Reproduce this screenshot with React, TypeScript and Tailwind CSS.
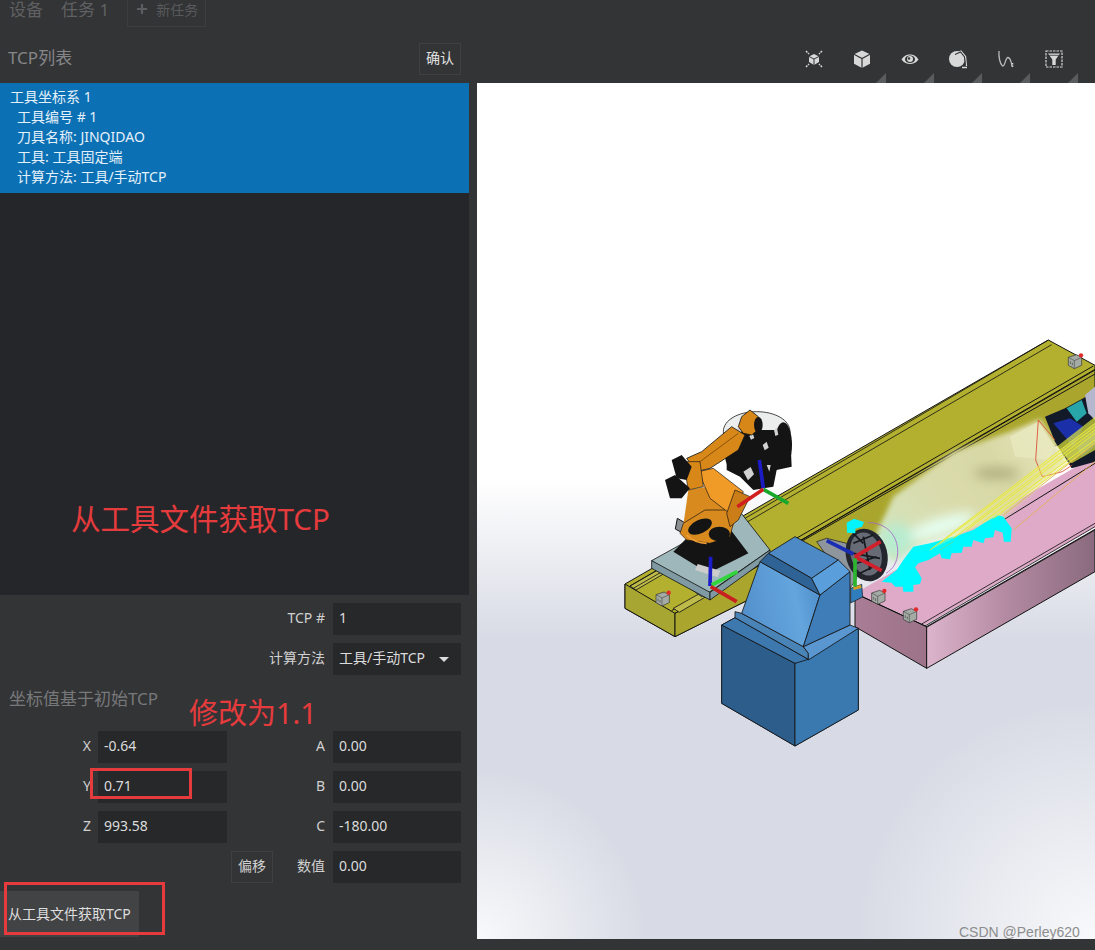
import React from "react";

function ToolBtn({ corner = true, children }: { corner?: boolean; children: React.ReactNode }) {
  return (
    <div className="relative flex h-10 w-12 items-start justify-center">
      <div className="mt-[4px] h-6 w-6">{children}</div>
      {corner && (
        <div className="absolute bottom-0 right-0 h-[10px] w-[10px] bg-[#5a5b5d] [clip-path:polygon(100%_0,100%_100%,0_100%)]" />
      )}
    </div>
  );
}

function Toolbar() {
  const c = "#d8d8d8";
  return (
    <div className="flex h-[56px] items-end justify-end pr-[17px]">
      <ToolBtn corner={false}>
        <svg viewBox="0 0 24 24" className="h-6 w-6" fill="none">
          <path d="M4 4l3 3M20 4l-3 3M4 20l3-3M20 20l-3-3" stroke={c} strokeWidth="1.5" strokeDasharray="2 1" />
          <path d="M12 7l5 2.500v5.500l-5 3-5-3V9.500z" fill={c} />
          <path d="M7 9.500l5 2.500 5-2.500M12 12v6" stroke="#333436" strokeWidth="1" />
        </svg>
      </ToolBtn>
      <ToolBtn>
        <svg viewBox="0 0 24 24" className="h-6 w-6" fill="none">
          <path d="M12 3.500l8 3.800v9.500L12 21 4 16.800V7.300z" fill={c} />
          <path d="M4 7.300L12 11.500l8-4.200M12 11.500V21" stroke="#333436" strokeWidth="1.200" />
        </svg>
      </ToolBtn>
      <ToolBtn>
        <svg viewBox="0 0 24 24" className="h-6 w-6" fill="none">
          <path d="M3.500 12.500C6 8.500 9 7.500 12 7.500s6 1 8.500 5c-2.500 3.500-5.500 4.500-8.500 4.500s-6-1-8.500-4.500z" fill={c} />
          <ellipse cx="12" cy="12.300" rx="5" ry="3.800" fill="#333436" />
          <circle cx="12" cy="12" r="3" fill={c} />
          <circle cx="11" cy="11.500" r="1.200" fill="#333436" />
        </svg>
      </ToolBtn>
      <ToolBtn>
        <svg viewBox="0 0 24 24" className="h-6 w-6" fill="none">
          <circle cx="11" cy="12" r="8" fill={c} />
          <path d="M9 7l6-3 4.500 5.500 1 9.500M16 20.500h5" stroke={c} strokeWidth="1.300" />
          <path d="M9 7.500l5.500-2.500 4 5 .8 8" stroke="#333436" strokeWidth="1.100" />
        </svg>
      </ToolBtn>
      <ToolBtn>
        <svg viewBox="0 0 24 24" className="h-6 w-6" fill="none">
          <path d="M5 4c-.5 6 1 13 3.500 15C11 20 11.500 10 14 10.500c2.500.5 3.500 5 4 9" stroke="#b9b9b9" strokeWidth="1.300" />
          <path d="M18.500 16v4.500" stroke={c} strokeWidth="1.600" strokeDasharray="1.500 1" />
        </svg>
      </ToolBtn>
      <ToolBtn>
        <svg viewBox="0 0 24 24" className="h-6 w-6" fill="none">
          <rect x="4" y="4" width="16" height="16" stroke={c} strokeWidth="1.200" strokeDasharray="2.500 1" />
          <path d="M6 6.500h12l-4.300 6V18h-3.400v-5.500z" fill={c} />
          <path d="M7 8.300h10" stroke="#333436" strokeWidth=".8" />
        </svg>
      </ToolBtn>
    </div>
  );
}

function Sensor({ x, y }: { x: number; y: number }) {
  return (
    <g transform={`translate(${x} ${y})`}>
      <path d="M-20 -8l24-8 16 8v24l-22 10-18-10z" fill="#a3aba4" stroke="#333" strokeWidth="2" />
      <path d="M-20 -8l18 10 22-10M-2 2v24" stroke="#333" strokeWidth="1.500" fill="none" />
      <path d="M-14 4v8M-8 8v8" stroke="#444" strokeWidth="2" />
      <circle cx="18" cy="-14" r="6.500" fill="#e22a2a" />
    </g>
  );
}

function Axis({ d, color }: { d: string; color: string }) {
  return <path d={d} stroke={color} strokeWidth="11" fill="none" strokeLinecap="butt" />;
}

function Scene() {
  const K = "#141414";
  return (
    <svg viewBox="-429 -741 1854 2568" className="block h-[856px] w-[618px]">
      <defs>
        <linearGradient id="pinkR" x1="920" y1="0" x2="1425" y2="0" gradientUnits="userSpaceOnUse">
          <stop offset="0" stopColor="#dcb4cc" />
          <stop offset=".45" stopColor="#b58ca3" />
          <stop offset="1" stopColor="#8a6a7e" />
        </linearGradient>
        <linearGradient id="pinkL" x1="705" y1="0" x2="920" y2="0" gradientUnits="userSpaceOnUse">
          <stop offset="0" stopColor="#a97d95" />
          <stop offset="1" stopColor="#9c7388" />
        </linearGradient>
        <linearGradient id="ghost" x1="780" y1="640" x2="1280" y2="300" gradientUnits="userSpaceOnUse">
          <stop offset="0" stopColor="#d4e4bc" />
          <stop offset=".4" stopColor="#dadbac" />
          <stop offset=".7" stopColor="#d8d8a6" />
          <stop offset="1" stopColor="#e6e5bb" />
        </linearGradient>
        <linearGradient id="hood" x1="365" y1="850" x2="600" y2="800" gradientUnits="userSpaceOnUse">
          <stop offset="0" stopColor="#5390cb" />
          <stop offset=".7" stopColor="#64a5de" />
          <stop offset="1" stopColor="#4f90cc" />
        </linearGradient>
        <filter id="b20"><feGaussianBlur stdDeviation="18" /></filter>
        <filter id="b8"><feGaussianBlur stdDeviation="8" /></filter>
      </defs>

      {/* yellow rail */}
      <path d="M15 762L1285 30l140 76v180L165 920 15 835z" fill="#b3b02f" stroke={K} strokeWidth="3" strokeLinejoin="round" />
      <path d="M15 762l150 88v70L15 835z" fill="#a8a633" stroke={K} strokeWidth="3" />
      <path d="M165 850L1425 118v170L165 920z" fill="#aaa62d" stroke={K} strokeWidth="3" />
      <path d="M165 850L1425 120M155 842L1420 108M180 842L1425 132" stroke={K} strokeWidth="3" fill="none" />
      <path d="M30 768l80-46 20 10-82 48zM1285 30L30 768" fill="#bebb4a" stroke={K} strokeWidth="2.500" />
      <path d="M40 775L1295 44" stroke={K} strokeWidth="2.500" />
      <path d="M160 835l85-48 18 10-85 50z" fill="#bebb4a" stroke={K} strokeWidth="2.500" />
      <Sensor x={128} y={802} />

      {/* plate */}
      <path d="M95 692L360 545l90 115-180 125-25 15z" fill="#9db7bb" stroke={K} strokeWidth="2.500" />
      <path d="M95 692l175 95v23L95 715z" fill="#7f9aa2" stroke={K} strokeWidth="2.500" />
      <path d="M270 787l180-127v20L270 810z" fill="#7f9aa2" stroke={K} strokeWidth="2.500" />

      {/* gripper */}
      <path d="M310 305c0-35 45-60 100-60s100 25 100 60-45 60-100 60-100-25-100-60z" fill="#eceded" stroke="#222" strokeWidth="2.500" />
      <path d="M320 340l50-40 140 0 5 110-45 10-10 50-60 10-40-40-40-20z" fill={K} />
      <ellipse cx="350" cy="375" rx="35" ry="50" fill={K} />
      <ellipse cx="490" cy="345" rx="26" ry="68" fill={K} />
      <path d="M370 425l22-14 10 22-18 18zM428 345l12-10 6 18-12 8zM462 300l9-6 4 20-9 4zM440 405l12 0-4 20zM388 318l10-8 5 14-10 5zM345 300l16-10 2 14-14 6z" fill="#d2d2d2" />

      {/* robot base */}
      <path d="M160 665l40-40 125-35 60 80-40 20-80 40-40-25z" fill={K} />
      <path d="M233 702l68 20-8 20-68-22z" fill="#ccc" />
      <path d="M172 565l24 14-8 30-22-12z" fill="#8b8f92" stroke={K} strokeWidth="3" />
      {/* lower arm and shoulder */}
      <path d="M205 480l55-10 90 60-10 60-90 0-60-5z" fill="#d98a1e" />
      <path d="M190 580l65-40 75 0 10 40-10 40-60 20-70-10-20-20z" fill="#d98a1e" stroke={K} strokeWidth="2" />
      <ellipse cx="240" cy="590" rx="38" ry="20" fill={K} transform="rotate(-25 240 590)" />
      <ellipse cx="298" cy="612" rx="32" ry="22" fill={K} />
      <path d="M200 615c20 20 40 25 60 25" stroke="#f0a038" strokeWidth="5" fill="none" />
      <path d="M235 425l45-10 90 70-15 40-20 30-65-50z" fill="#f09b28" stroke={K} strokeWidth="2" />
      <path d="M345 480l45 20-35 70-25 20-10-40z" fill="#cb7d17" stroke={K} strokeWidth="2" />
      {/* upper arm */}
      <path d="M200 385l45-20 90-75 40 25-20 45-85 55-40 10z" fill="#d88819" stroke={K} strokeWidth="2.500" />
      <path d="M240 395l115-85" stroke="#8a5208" strokeWidth="3" />
      <path d="M365 260l25-20 25 20 10 30-30 25-25-5-15-20z" fill="#d78717" stroke={K} strokeWidth="2.500" />
      <ellipse cx="415" cy="285" rx="13" ry="24" fill={K} />
      {/* motors */}
      <path d="M190 395l50 0 10 75-45 10z" fill="#d88819" stroke={K} strokeWidth="2" />
      <path d="M135 450l30-15 45 40-25 30-35 0z" fill={K} />
      <path d="M155 390l30-15 30 35-15 40-30-5z" fill={K} />

      <Axis d="M418 390L430 475" color="#1c1cc6" />
      <Axis d="M430 478L505 520" color="#18a92c" />
      <Axis d="M430 478L352 530" color="#d11f1f" />
      <Axis d="M272 680L270 768" color="#1c1cc6" />
      <Axis d="M275 765L352 725" color="#2fd53a" />
      <Axis d="M272 770L350 815" color="#c82020" />

      {/* pink rail */}
      <path d="M705 790L1425 378v212L915 885z" fill="#dfaac8" />
      <path d="M705 790v100l215 125V890z" fill="url(#pinkL)" stroke={K} strokeWidth="3" />
      <path d="M920 890v125l505-290V598z" fill="url(#pinkR)" stroke={K} strokeWidth="3" />
      <path d="M905 882L1425 580M915 888L1425 590M920 892L1425 600" stroke={K} strokeWidth="2.500" fill="none" />
      <path d="M705 790l215 100" stroke={K} strokeWidth="3" />
      <path d="M1150 570L1425 400" stroke={K} strokeWidth="3" />
      <Sensor x={775} y={797} />
      <Sensor x={870} y={852} />
      <Sensor x={1365} y={90} />

      {/* ghost cone */}
      <g filter="url(#b8)">
        <path d="M770 610L820 500L1000 365L1170 305L1260 268L1340 390L1140 570L880 650L820 700z" fill="url(#ghost)" />
      </g>
      <g filter="url(#b20)">
        <ellipse cx="960" cy="590" rx="110" ry="26" fill="#e6fff2" transform="rotate(-18 960 590)" />
        <ellipse cx="830" cy="630" rx="50" ry="50" fill="#b8ecd0" />
        <ellipse cx="1130" cy="430" rx="70" ry="15" fill="#a9a97a" />
      </g>
      <path d="M1170 320l85-45 50 75-20 40-100-10z" fill="#e9e8bf" opacity=".8" />

      {/* right robot */}
      <path d="M1275 260l60-25 90-50v210l-70 20-50-80z" fill="#121a2a" />
      <path d="M1340 235l45-25 15 40-30 25z" fill="#27a5a8" />
      <path d="M1395 195l30-25v100l-20-20z" fill="#b5b7cf" />
      <path d="M1300 280l60 70 30-60-40-25zM1370 350l55-50v50l-40 30z" fill="#1a2fa8" />
      <path d="M1310 350l115-90v100l-70 40z" fill="#dfe53a" opacity=".7" />
      <path d="M1255 270l50 60M1255 270l-8 120 20 50 60-15 30-20" stroke="#d9472c" strokeWidth="2.500" fill="none" />

      {/* tool */}
      <path d="M590 635l30-10 60 15 30 105-20 30z" fill="#8f959c" stroke={K} strokeWidth="2" />
      <ellipse cx="740" cy="675" rx="62" ry="80" fill="#23262d" transform="rotate(-15 740 675)" />
      <ellipse cx="738" cy="672" rx="46" ry="66" fill="#666b75" transform="rotate(-15 738 672)" />
      <path d="M700 640l60-25M710 700l60-20M730 620l20 100M700 670l80 15M720 730l40-20M700 610l30 30" stroke="#16181c" strokeWidth="5" fill="none" />
      <path d="M745 578c55 0 90 40 88 90-1 30-15 50-35 62" stroke="#a565c8" strokeWidth="2.500" fill="none" />
      <path d="M692 775l33-12 3 38-36 18z" fill="#2f7dbd" stroke={K} strokeWidth="2" />
      <path d="M700 772l22-8 3 10-25 6z" fill="#d79b24" />

      {/* cyan */}
      <path d="M680 578L702 566L732 576L726 590L706 596L706 610L681 608z" fill="#00f5ff" />
      <path d="M785 755L830 720L850 690L880 650L930 640L1000 620L1060 600L1130 555L1150 560L1175 595L1172 635L1152 635L1148 608L1125 600L1120 622L1095 625L1090 640L1060 630L1055 650L1030 650L1025 668L995 670L990 688L965 685L960 670L925 690L895 700L885 712L905 745L900 762L880 765L880 785L850 785L848 770L825 770L815 758z" fill="#00f8ff" />
      <path d="M930 660L1425 280L1425 340L1130 560z" fill="#f2f27a" opacity=".35" />
      <path d="M930 660L1425 280M960 640L1425 290M1000 625L1425 300M1040 600L1425 310M1090 575L1425 330M1120 565L1425 340" stroke="#e8e83a" strokeWidth="3" fill="none" />
      <path d="M1150 555L1425 340M1180 600L1425 395" stroke="#e3b14f" strokeWidth="2.500" fill="none" />
      <path d="M960 660l40-25" stroke="#7dd26a" strokeWidth="2" />

      {/* blue stand */}
      <path d="M305 885l40-22 220 125 150-90v242L525 1248 305 1120z" fill="#3b76ad" stroke={K} strokeWidth="2.500" strokeLinejoin="round" />
      <path d="M305 885l220 115v248L305 1120z" fill="#2c5d8b" stroke={K} strokeWidth="2.500" />
      <path d="M525 1000l190-105v245L525 1248z" fill="#3a78b0" stroke={K} strokeWidth="2.500" />
      <path d="M305 885l40-22 220 125-40 12z" fill="#3d78af" stroke={K} strokeWidth="2.500" />
      <path d="M345 845l20 5 185 100 15 20v18L345 863z" fill="#4a83b6" stroke={K} strokeWidth="2.500" />
      <path d="M550 950l140-65 25 10-150 95v-20z" fill="#5a96cf" stroke={K} strokeWidth="2.500" />
      <path d="M420 695l180 100-50 155-185-100z" fill="url(#hood)" stroke={K} strokeWidth="2.500" />
      <path d="M600 795l90-70v160l-140 65z" fill="#3e7db8" stroke={K} strokeWidth="2.500" />
      <path d="M445 670l80-50 130 70-80 55z" fill="#4d8ac5" stroke={K} strokeWidth="2.500" />
      <path d="M420 695l25-25 130 75 25 50z" fill="#2f6295" stroke={K} strokeWidth="2.500" />
      <path d="M575 745l80-55 35 35-90 70z" fill="#5a9fdc" stroke={K} strokeWidth="2.500" />

      {/* tool axes */}
      <Axis d="M620 632L700 672" color="#1a2cb4" />
      <Axis d="M705 680L782 635" color="#d31f2c" />
      <Axis d="M705 680L785 722" color="#d31f2c" />
      <Axis d="M705 685L705 770" color="#2cb52f" />
    </svg>
  );
}

function Input({ w, value, caret }: { w: string; value: string; caret?: boolean }) {
  return (
    <div className={`flex h-8 items-center justify-between bg-[#27282a] pb-[2px] pl-[6px] pr-[12px] text-sm text-[#dcdcdc] ${w}`}>
      <span>{value}</span>
      {caret && <span className="mt-[3px] h-0 w-0 border-x-[5px] border-t-[5px] border-x-transparent border-t-[#dcdcdc]" />}
    </div>
  );
}

function Pair({ l1, v1, l2, v2 }: { l1: string; v1: string; l2: string; v2: string }) {
  return (
    <div className="flex h-8 items-center">
      <span className="w-[91px] pb-[2px] text-right text-sm text-[#d0d0d0]">{l1}</span>
      <div className="ml-[7px]">
        <Input w="w-[129px]" value={v1} />
      </div>
      <span className="w-[98px] pb-[2px] text-right text-sm text-[#d0d0d0]">{l2}</span>
      <div className="ml-2">
        <Input w="w-[128px]" value={v2} />
      </div>
    </div>
  );
}

function Single({ label, value, caret }: { label: string; value: string; caret?: boolean }) {
  return (
    <div className="flex h-8 items-center">
      <span className="w-[325px] pb-[2px] text-right text-sm text-[#d0d0d0]">{label}</span>
      <div className="ml-2">
        <Input w="w-[128px]" value={value} caret={caret} />
      </div>
    </div>
  );
}

export default function App() {
  return (
    <div className="relative flex h-[950px] w-[1095px] flex-col overflow-hidden bg-[#333436] font-['Noto_Sans','Noto_Sans_CJK_SC',sans-serif]">
      {/* tabs */}
      <div className="flex h-[27px] items-start pl-[9px] text-[17px] leading-[19px] text-[#606163]">
        <span>设备</span>
        <span className="ml-[18px]">任务 1</span>
        <div className="ml-[18px] flex h-[27px] w-[79px] items-start gap-[8px] border border-t-0 border-[#3d3e40] pl-[8px] text-sm">
          <svg viewBox="0 0 12 12" className="mt-[3px] h-3 w-3">
            <path d="M6 1v10M1 6h10" stroke="#5c5d60" strokeWidth="2.200" />
          </svg>
          <span className="text-[#58595c]">新任务</span>
        </div>
      </div>

      <div className="flex flex-1">
        {/* left column */}
        <div className="flex w-[477px] flex-col">
          <div className="flex h-[56px] items-start justify-between pr-[16px] pl-2 pt-[16px]">
            <span className="mt-[3px] text-[17px] leading-[24px] text-[#858688]">TCP列表</span>
            <div className="flex h-8 w-[42px] items-center justify-center border border-[#3f4042] pb-[2px] text-sm text-[#e0e0e0]">确认</div>
          </div>
          <div className="w-[469px] flex-col">
            <div className="h-[110px] bg-[#0c70b4] pl-[10px] pt-1 text-sm leading-5 text-[#e4f0fa]">
              <div>工具坐标系 1</div>
              <div className="pl-[7px]">工具编号 # 1</div>
              <div className="pl-[7px]">刀具名称: JINQIDAO</div>
              <div className="pl-[7px]">工具: 工具固定端</div>
              <div className="pl-[7px]">计算方法: 工具/手动TCP</div>
            </div>
            <div className="h-[402px] bg-[#25262a]" />
          </div>
          <div className="mt-2 flex flex-col gap-2">
            <Single label="TCP #" value="1" />
            <Single label="计算方法" value="工具/手动TCP" caret />
            <div className="h-[40px] pl-[9px] pt-[4px] text-[17px] leading-[24px] text-[#77787a]">坐标值基于初始TCP</div>
            <Pair l1="X" v1="-0.64" l2="A" v2="0.00" />
            <Pair l1="Y" v1="0.71" l2="B" v2="0.00" />
            <Pair l1="Z" v1="993.58" l2="C" v2="-180.00" />
            <div className="flex h-8 items-center">
              <div className="ml-[231px] flex h-8 w-[42px] items-center justify-center border border-[#3f4042] pb-[2px] text-sm text-[#d0d0d0]">偏移</div>
              <span className="w-[52px] pb-[2px] text-right text-sm text-[#d0d0d0]">数值</span>
              <div className="ml-2">
                <Input w="w-[128px]" value="0.00" />
              </div>
            </div>
          </div>
          <div className="mt-2 flex h-[46px] w-[139px] items-center bg-[#424345] pl-2 text-sm whitespace-nowrap text-[#dedede]">从工具文件获取TCP</div>
        </div>

        {/* right column */}
        <div className="flex flex-1 flex-col">
          <Toolbar />
          <div className="h-[856px] bg-[radial-gradient(ellipse_170px_170px_at_0%_100%,#f8f9fb,transparent),radial-gradient(ellipse_240px_240px_at_100%_100%,#f8f9fb,transparent),linear-gradient(180deg,#ffffff_0%,#ffffff_46%,#d8dbe5_65%,#d8dbe5_100%)]">
            <Scene />
          </div>
        </div>
      </div>

      {/* annotations */}
      <span className="absolute left-[71px] top-[497px] text-[29.500px] leading-[44px] whitespace-nowrap text-[#e53b3d]">从工具文件获取TCP</span>
      <span className="absolute left-[189px] top-[691px] text-[29px] leading-[44px] whitespace-nowrap text-[#e53b3d]">修改为1.1</span>
      <div className="absolute left-[90px] top-[768px] h-[31px] w-[102px] border-[3px] border-[#e53b3d]" />
      <div className="absolute left-[4px] top-[882px] h-[53px] w-[161px] border-[3px] border-[#e53b3d]" />
      <span className="absolute left-[959px] top-[923px] text-[14px] leading-[18px] text-[#8d8d8d] font-['Liberation_Sans',sans-serif]">CSDN @Perley620</span>
    </div>
  );
}
